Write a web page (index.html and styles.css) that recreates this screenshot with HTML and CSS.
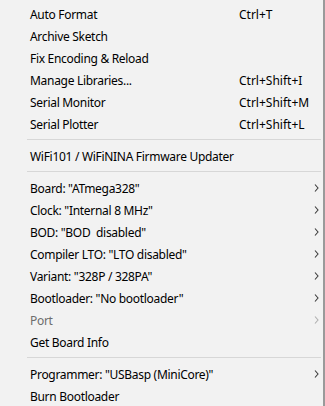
FILE: index.html
```html
<!DOCTYPE html>
<html>
<head>
	<title>Tools</title>
	<meta name="viewport" content="width=device-width, initial-scale=1">
	<link rel="stylesheet" href="styles.css">
</head>
<body>

	<div id="menu">
		<div class="item"><span class="label">Auto Format</span><span class="accel">Ctrl+T</span></div>
		<div class="item"><span class="label">Archive Sketch</span></div>
		<div class="item"><span class="label">Fix Encoding &amp; Reload</span></div>
		<div class="item"><span class="label">Manage Libraries...</span><span class="accel">Ctrl+Shift+I</span></div>
		<div class="item"><span class="label">Serial Monitor</span><span class="accel">Ctrl+Shift+M</span></div>
		<div class="item"><span class="label">Serial Plotter</span><span class="accel">Ctrl+Shift+L</span></div>
		<div class="sep"></div>
		<div class="item"><span class="label">WiFi101 / WiFiNINA Firmware Updater</span></div>
		<div class="sep"></div>
		<div class="item sub"><span class="label">Board: "ATmega328"</span><svg class="arrow" width="5" height="8" viewBox="0 0 5 8"><path d="M1 0.5 L4 4 L1 7.5"/></svg></div>
		<div class="item sub"><span class="label">Clock: "Internal 8 MHz"</span><svg class="arrow" width="5" height="8" viewBox="0 0 5 8"><path d="M1 0.5 L4 4 L1 7.5"/></svg></div>
		<div class="item sub"><span class="label">BOD: "BOD&nbsp; disabled"</span><svg class="arrow" width="5" height="8" viewBox="0 0 5 8"><path d="M1 0.5 L4 4 L1 7.5"/></svg></div>
		<div class="item sub"><span class="label">Compiler LTO: "LTO disabled"</span><svg class="arrow" width="5" height="8" viewBox="0 0 5 8"><path d="M1 0.5 L4 4 L1 7.5"/></svg></div>
		<div class="item sub"><span class="label">Variant: "328P / 328PA"</span><svg class="arrow" width="5" height="8" viewBox="0 0 5 8"><path d="M1 0.5 L4 4 L1 7.5"/></svg></div>
		<div class="item sub"><span class="label">Bootloader: "No bootloader"</span><svg class="arrow" width="5" height="8" viewBox="0 0 5 8"><path d="M1 0.5 L4 4 L1 7.5"/></svg></div>
		<div class="item sub disabled"><span class="label">Port</span><svg class="arrow" width="5" height="8" viewBox="0 0 5 8"><path d="M1 0.5 L4 4 L1 7.5"/></svg></div>
		<div class="item"><span class="label">Get Board Info</span></div>
		<div class="sep"></div>
		<div class="item sub"><span class="label">Programmer: "USBasp (MiniCore)"</span><svg class="arrow" width="5" height="8" viewBox="0 0 5 8"><path d="M1 0.5 L4 4 L1 7.5"/></svg></div>
		<div class="item"><span class="label">Burn Bootloader</span></div>
	</div>

</body>
</html>
```

FILE: styles.css
```css
* {
	box-sizing: border-box;
}

html, body {
	margin: 0;
	height: 100%;
	background-color: #f2f2f2;
}

#menu {
	width: 325px;
	height: 406px;
	padding-top: 3px;
	background-color: #f2f2f2;
	border-right: 2px solid #9a9a9a;
	font-family: "Noto Sans", "Open Sans", sans-serif;
	font-size: 12px;
	letter-spacing: -0.3px;
	color: #000;
	overflow: hidden;
}

.item {
	display: flex;
	align-items: center;
	height: 22px;
	padding-left: 30px;
	padding-right: 4px;
	white-space: nowrap;
}

.label {
	width: 209px;
	flex-shrink: 0;
}

.item.sub .label {
	flex-grow: 1;
}

.accel {
	flex-grow: 1;
	letter-spacing: 0;
}

.arrow {
	fill: none;
	stroke: #3c3c3c;
	stroke-width: 1.1;
}

.disabled {
	color: #6d6d6d;
}

.disabled .arrow {
	stroke: #b0b0b0;
}

.sep {
	height: 10px;
	padding: 4px 2px 5px 27px;
}

.sep::after {
	content: "";
	display: block;
	height: 1px;
	background-color: #d7d7d7;
}
```
